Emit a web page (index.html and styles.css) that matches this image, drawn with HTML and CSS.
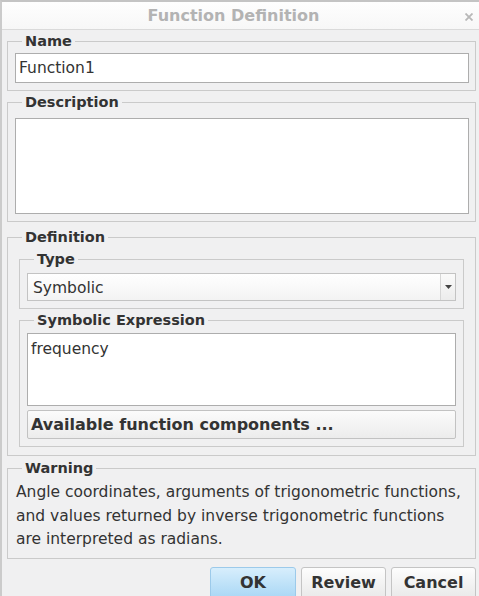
FILE: index.html
```html
<!DOCTYPE html>
<html>
<head>
<meta charset="utf-8">
<link rel="stylesheet" href="styles.css">
</head>
<body>
<div class="dialog">
  <div class="titlebar">
    <div class="title">Function Definition</div>
    <div class="close"><svg width="8" height="8" viewBox="0 0 8 8"><path d="M0.5 0.5 L7.5 7.5 M7.5 0.5 L0.5 7.5" stroke="#b8b8b8" stroke-width="1.8"/></svg></div>
  </div>
  <div class="content">
    <fieldset class="group g-name">
      <legend>Name</legend>
      <div class="field name-input">Function1</div>
    </fieldset>
    <fieldset class="group g-desc">
      <legend>Description</legend>
      <div class="field desc-input"></div>
    </fieldset>
    <fieldset class="group g-def">
      <legend>Definition</legend>
      <fieldset class="group g-type">
        <legend>Type</legend>
        <div class="select">
          <span class="select-value">Symbolic</span>
          <span class="select-arrow"><svg width="7" height="4" viewBox="0 0 7 4"><path d="M0 0 H7 L3.5 4 Z" fill="#444"/></svg></span>
        </div>
      </fieldset>
      <fieldset class="group g-expr">
        <legend>Symbolic Expression</legend>
        <div class="field expr-input">frequency</div>
        <div class="wide-button">Available function components ...</div>
      </fieldset>
    </fieldset>
    <fieldset class="group g-warn">
      <legend>Warning</legend>
      <p class="warn-text">Angle coordinates, arguments of trigonometric functions, and values returned by inverse trigonometric functions are interpreted as radians.</p>
    </fieldset>
    <div class="buttons">
      <div class="btn btn-ok">OK</div>
      <div class="btn">Review</div>
      <div class="btn">Cancel</div>
    </div>
  </div>
</div>
</body>
</html>
```
FILE: styles.css
```css
* { box-sizing: border-box; }
html, body { margin: 0; padding: 0; }
body {
  width: 479px;
  height: 596px;
  overflow: hidden;
  font-family: "DejaVu Sans", Verdana, sans-serif;
  color: #333;
  background: #f0f0f1;
}
.dialog {
  width: 479px;
  height: 596px;
  border-top: 2px solid #c4c4c4;
  border-left: 2px solid #cbcbcb;
  background: #f0f0f1;
}
.titlebar {
  height: 28px;
  display: flex;
  align-items: center;
  border-bottom: 1px solid #dadada;
  background: linear-gradient(#fefefe, #f7f7f7);
}
.title {
  flex: 1;
  text-align: center;
  padding-left: 18px;
  padding-right: 18px;
  font-weight: bold;
  font-size: 16px;
  color: #b3b3b3;
}
.close {
  width: 14px;
  margin-right: 0;
  display: flex;
  align-items: center;
  margin-top: 2px;
}
.content {
  padding: 0 3px 0 5px;
}
.group {
  margin: 0;
  border: 1px solid #cacaca;
  padding: 0 6px 7px 7px;
  min-width: 0;
}
.group legend {
  font-weight: bold;
  font-size: 14.5px;
  line-height: 18px;
  color: #333;
  padding: 0 3px;
  margin-left: 7px;
}
.field {
  background: #fff;
  border: 1px solid #adadad;
  font-size: 15.5px;
  color: #333;
  padding: 4px 3px;
  line-height: 20px;
}
.g-name { margin-top: 2px; padding-top: 3px; }
.name-input { height: 30px; }
.g-desc { margin-top: 2px; padding-top: 7px; }
.desc-input { height: 96px; }
.g-def { margin-top: 6px; padding: 4px 11px 8px 11px; }
.g-def > legend { margin-left: 3px; }
.g-type { padding: 5px 7px 7px 7px; }
.select {
  height: 28px;
  display: flex;
  border: 1px solid #c3c3c3;
  background: linear-gradient(#ffffff, #f3f3f3);
  font-size: 15.5px;
  line-height: 20px;
}
.select-value { flex: 1; padding: 4px 5px 2px; }
.select-arrow {
  width: 15px;
  border-left: 1px solid #d6d6d6;
  display: flex;
  align-items: center;
  justify-content: center;
  background: linear-gradient(#fafafa, #ececec);
}
.g-expr { margin-top: 2px; padding: 4px 7px 7px 7px; }
.expr-input { height: 73px; padding: 5px 3px 2px; }
.wide-button {
  margin-top: 4px;
  height: 29px;
  border: 1px solid #c2c2c2;
  border-radius: 2px;
  background: linear-gradient(#fbfbfb, #ececec);
  font-weight: bold;
  font-size: 16px;
  line-height: 28px;
  padding-left: 3px;
  color: #333;
}
.g-warn { margin-top: 3px; padding: 4px 6px 6px 7px; }
.warn-text {
  margin: 0;
  font-size: 15.5px;
  line-height: 23.5px;
  color: #333;
  padding-left: 1px;
}
.buttons {
  display: flex;
  justify-content: flex-end;
  gap: 5px;
  margin-top: 8px;
}
.btn {
  width: 85px;
  height: 32px;
  border: 1px solid #c4c4c4;
  border-radius: 3px;
  background: linear-gradient(#fdfdfd, #e9e9e9);
  font-weight: bold;
  font-size: 16px;
  line-height: 29px;
  text-align: center;
  color: #333;
}
.btn-ok {
  width: 86px;
  border-color: #9ccaea;
  background: linear-gradient(#d7eefc, #a9d7f5);
}
```
